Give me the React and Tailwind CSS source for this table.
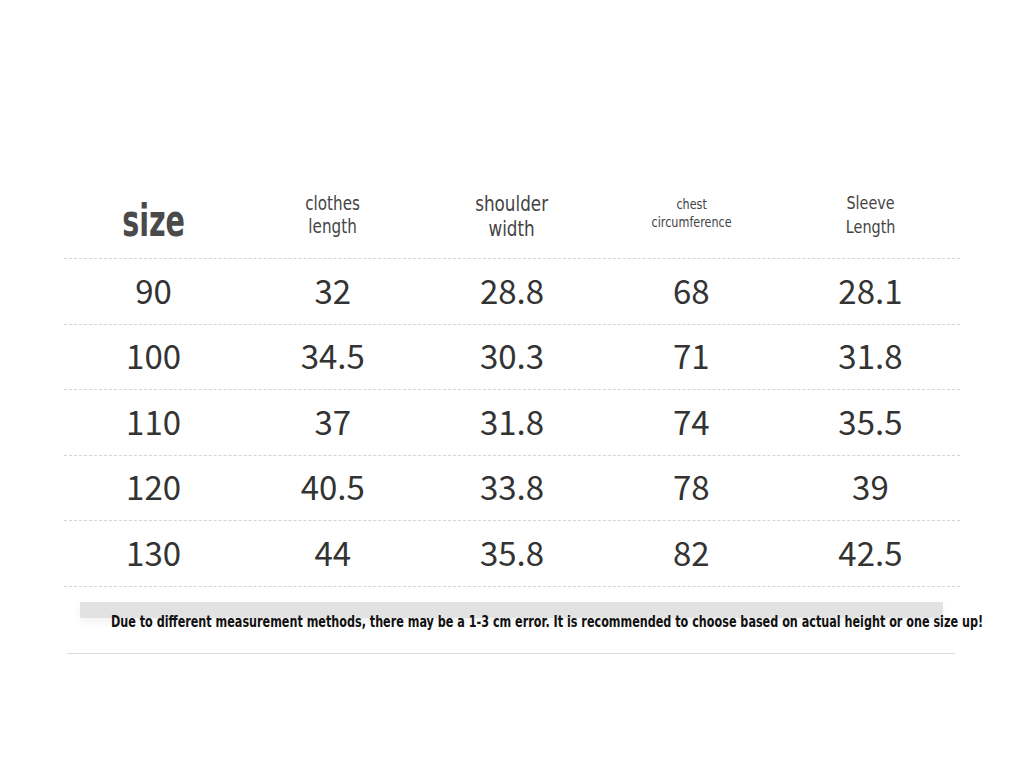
const heads = [
  { lines: ['size'], cls: 'text-[44px] font-bold text-[#4a4a4a] leading-none pt-3 scale-x-[0.65]' },
  { lines: ['clothes', 'length'], cls: 'text-[19px] leading-[23px] text-[#444] scale-x-[0.8]' },
  { lines: ['shoulder', 'width'], cls: 'text-[21px] leading-[25px] text-[#444] pt-1 scale-x-[0.8]' },
  { lines: ['chest', 'circumference'], cls: 'text-[14px] leading-[18px] text-[#444] pb-1 scale-x-[0.8]' },
  { lines: ['Sleeve', 'Length'], cls: 'text-[18px] leading-[24px] text-[#444] scale-x-[0.8]' },
];

const rows = [
  ['90', '32', '28.8', '68', '28.1'],
  ['100', '34.5', '30.3', '71', '31.8'],
  ['110', '37', '31.8', '74', '35.5'],
  ['120', '40.5', '33.8', '78', '39'],
  ['130', '44', '35.8', '82', '42.5'],
];

const narrow = { fontFamily: '"DejaVu Sans", sans-serif' };
const cjk = { fontFamily: '"Noto Sans CJK SC", "Noto Sans", sans-serif' };

export default function App() {
  return (
    <div className="w-[1024px] h-[768px] bg-white overflow-hidden pt-[181px]">
      <div className="w-[896px] mx-auto">
        <div className="grid grid-cols-5 h-[78px] pb-[10px] border-b border-dashed border-[#d4d4d4]" style={narrow}>
          {heads.map((h, i) => (
            <div key={i} className={`flex flex-col items-center justify-center text-center ${h.cls}`}>
              {h.lines.map((l) => (
                <span key={l}>{l}</span>
              ))}
            </div>
          ))}
        </div>
        {rows.map((r) => (
          <div key={r[0]} className="grid grid-cols-5 h-[65.5px] border-b border-dashed border-[#d4d4d4]" style={cjk}>
            {r.map((v, i) => (
              <div key={i} className="flex items-center justify-center text-[33px] text-[#333] leading-none pb-[2px]">
                {v}
              </div>
            ))}
          </div>
        ))}
      </div>

      <div className="ml-[80px] mt-[15px] w-[863px] h-[16px] bg-[#e2e2e2] shadow-[0_4px_8px_rgba(0,0,0,0.06)]"></div>
      <div className="ml-[111px] -mt-[5px] leading-[16px] w-[880px] overflow-visible">
        <span className="inline-block origin-left scale-x-[0.7] text-[16px] font-bold text-[#111] whitespace-nowrap" style={narrow}>
          Due to different measurement methods, there may be a 1-3 cm error. It is recommended to choose based on actual height or one size up!
        </span>
      </div>
      <div className="ml-[67px] mt-[23px] w-[888px] border-t border-[#dcdcdc]"></div>
    </div>
  );
}
